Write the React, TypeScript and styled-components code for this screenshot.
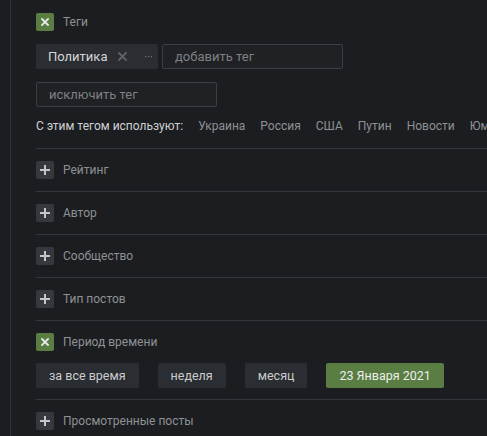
import React from 'react'
import styled, { createGlobalStyle } from 'styled-components'

const GlobalStyle = createGlobalStyle`
    html, body {
        margin: 0;
        padding: 0;
        background-color: #1b1d20;
        font-family: Roboto, "Noto Sans", "Liberation Sans", sans-serif;
    }
`

const Page = styled.div`
    width: 487px;
    height: 436px;
    overflow: hidden;
    padding-left: 10px;
    box-sizing: border-box;
`

const Panel = styled.div`
    border-left: 1px solid #2d3034;
    padding-left: 25px;
    height: 100%;
`

const Section = styled.div<{ $top?: number; $bottom?: number; $last?: boolean }>`
    padding: ${({ $top }) => $top ?? 12}px 0 ${({ $bottom }) => $bottom ?? 12}px;
    border-bottom: ${({ $last }) => ($last ? 'none' : '1px solid #34373b')};
`

const Header = styled.div`
    display: flex;
    align-items: center;
    gap: 9px;
    height: 18px;
`

const Box = styled.div<{ $active?: boolean }>`
    width: 18px;
    height: 18px;
    flex-shrink: 0;
    border-radius: 2px;
    display: flex;
    align-items: center;
    justify-content: center;
    background-color: ${({ $active }) => ($active ? '#5a7d44' : '#35383c')};
`

const Label = styled.span`
    font-size: 12px;
    line-height: 18px;
    color: #8e9195;
`

const Row = styled.div<{ $gap?: number; $top?: number }>`
    display: flex;
    align-items: center;
    gap: ${({ $gap }) => $gap ?? 4}px;
    margin-top: ${({ $top }) => $top ?? 13}px;
`

const Chip = styled.div`
    display: flex;
    align-items: center;
    height: 25px;
    width: 122px;
    box-sizing: border-box;
    padding: 0 0 0 12px;
    background-color: #2a2d31;
    border-radius: 2px;
    color: #d4d5d7;
    font-size: 13px;
`

const ChipClose = styled.span`
    display: flex;
    margin-left: 11px;
`

const ChipMore = styled.span`
    display: flex;
    margin-left: 18px;
`

const Input = styled.input`
    width: 181px;
    height: 25px;
    box-sizing: border-box;
    padding: 0 12px;
    background-color: #1f2124;
    border: 1px solid #3b3e42;
    border-radius: 2px;
    color: #d2d3d5;
    font-family: inherit;
    font-size: 13px;
    outline: none;

    &::placeholder {
        color: #7d8084;
    }
`

const Related = styled.div`
    display: flex;
    align-items: center;
    margin-top: 11px;
    height: 16px;
    white-space: nowrap;
    font-size: 12px;
`

const RelatedTitle = styled.span`
    color: #d0d1d3;
    margin-right: 15px;
`

const RelatedTag = styled.span`
    color: #8e9195;
    margin-right: 15px;
`

const PeriodButton = styled.button<{ $active?: boolean }>`
    height: 25px;
    padding: 0 13px;
    border: none;
    border-radius: 2px;
    font-family: inherit;
    font-size: 12.5px;
    background-color: ${({ $active }) => ($active ? '#5a7d44' : '#2a2d31')};
    color: ${({ $active }) => ($active ? '#eceee9' : '#cbcccf')};
`

const CrossIcon = ({ color = '#e8ebe5', size = 8 }: { color?: string; size?: number }) => (
    <svg width={size} height={size} viewBox="0 0 8 8">
        <path d="M1 1L7 7M7 1L1 7" stroke={color} strokeWidth="1.8" strokeLinecap="square" />
    </svg>
)

const PlusIcon = () => (
    <svg width="10" height="10" viewBox="0 0 10 10">
        <path d="M5 0V10M0 5H10" stroke="#c3c5c8" strokeWidth="2" />
    </svg>
)

const DotsIcon = () => (
    <svg width="7" height="2" viewBox="0 0 7 2">
        <rect x="0" y="0" width="1.2" height="1.2" fill="#6b6e72" />
        <rect x="2.9" y="0" width="1.2" height="1.2" fill="#6b6e72" />
        <rect x="5.8" y="0" width="1.2" height="1.2" fill="#6b6e72" />
    </svg>
)

const collapsed = ['Рейтинг', 'Автор', 'Сообщество', 'Тип постов']
const relatedTags = ['Украина', 'Россия', 'США', 'Путин', 'Новости', 'Юмор']
const periods = ['за все время', 'неделя', 'месяц']

const App: React.FunctionComponent = () => {
    return (
        <>
            <GlobalStyle />
            <Page>
                <Panel>
                    <Section $top={13} $bottom={14}>
                        <Header>
                            <Box $active>
                                <CrossIcon />
                            </Box>
                            <Label>Теги</Label>
                        </Header>
                        <Row>
                            <Chip>
                                Политика
                                <ChipClose>
                                    <CrossIcon color="#5f6266" size={9} />
                                </ChipClose>
                                <ChipMore>
                                    <DotsIcon />
                                </ChipMore>
                            </Chip>
                            <Input placeholder="добавить тег" />
                        </Row>
                        <Row>
                            <Input placeholder="исключить тег" />
                        </Row>
                        <Related>
                            <RelatedTitle>С этим тегом используют:</RelatedTitle>
                            {relatedTags.map((tag) => (
                                <RelatedTag key={tag}>{tag}</RelatedTag>
                            ))}
                        </Related>
                    </Section>

                    {collapsed.map((title) => (
                        <Section key={title}>
                            <Header>
                                <Box>
                                    <PlusIcon />
                                </Box>
                                <Label>{title}</Label>
                            </Header>
                        </Section>
                    ))}

                    <Section $bottom={11}>
                        <Header>
                            <Box $active>
                                <CrossIcon />
                            </Box>
                            <Label>Период времени</Label>
                        </Header>
                        <Row $gap={19} $top={12}>
                            {periods.map((p) => (
                                <PeriodButton key={p}>{p}</PeriodButton>
                            ))}
                            <PeriodButton $active>23 Января 2021</PeriodButton>
                        </Row>
                    </Section>

                    <Section $last>
                        <Header>
                            <Box>
                                <PlusIcon />
                            </Box>
                            <Label>Просмотренные посты</Label>
                        </Header>
                    </Section>
                </Panel>
            </Page>
        </>
    )
}

export default App
